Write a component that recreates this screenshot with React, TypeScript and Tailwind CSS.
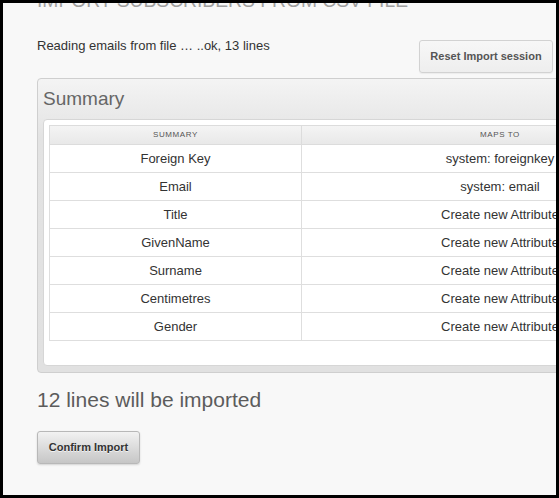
const rows: [string, string][] = [
  ["Foreign Key", "system: foreignkey"],
  ["Email", "system: email"],
  ["Title", "Create new Attribute"],
  ["GivenName", "Create new Attribute"],
  ["Surname", "Create new Attribute"],
  ["Centimetres", "Create new Attribute"],
  ["Gender", "Create new Attribute"],
];

const font = "font-['Liberation_Sans',Arial,sans-serif]";

export default function App() {
  return (
    <div className={"w-[559px] h-[498px] bg-black p-[3px] " + font}>
      <div className="h-full bg-[#f8f8f8] overflow-hidden pl-[34px]">
        {/* Page title, scrolled mostly out of view */}
        <h1 className="mt-[-12px] text-[19.3px] leading-[19px] uppercase text-[#a0a0a0] whitespace-nowrap">
          Import subscribers from CSV file
        </h1>

        <div className="mt-[28px] w-[516px] flex items-start justify-between">
          <p className="text-[13px] leading-[16px] text-[#333]">
            Reading emails from file … ..ok, 13 lines
          </p>
          <button className="mt-[2px] h-[33px] w-[134px] rounded-[3px] border border-[#d2d2d2] bg-gradient-to-b from-[#f7f7f7] to-[#eeeeee] text-[11px] font-bold text-[#555] shadow-[0_1px_1px_rgba(0,0,0,0.05)]">
            Reset Import session
          </button>
        </div>

        {/* Summary panel */}
        <div className="mt-[5px] w-[674px] rounded-[4px] border border-[#cfcfcf] bg-gradient-to-b from-[#f4f4f4] via-[#e3e3e3] via-[20%] to-[#e1e1e1] px-[5px] pb-[6px]">
          <h2 className="pt-[8px] mb-[8px] text-[19px] leading-[24px] text-[#666]">Summary</h2>
          <div className="rounded-[4px] border border-[#d6d6d6] bg-white pt-[5px] px-[5px] pb-[24px]">
            <table className="w-[650px] border-collapse text-[13px] text-[#333]">
              <thead>
                <tr className="h-[19px] bg-gradient-to-b from-[#f4f4f4] to-[#e8e8e8]">
                  <th className="w-[252px] border border-[#dcdcdc] text-[8px] font-normal tracking-[0.6px] text-[#555] uppercase">
                    Summary
                  </th>
                  <th className="border border-[#dcdcdc] text-[8px] font-normal tracking-[0.6px] text-[#555] uppercase">
                    Maps to
                  </th>
                </tr>
              </thead>
              <tbody>
                {rows.map(([k, v]) => (
                  <tr key={k} className="h-[28px]">
                    <td className="border border-[#dedede] text-center">{k}</td>
                    <td className="border border-[#dedede] text-center">{v}</td>
                  </tr>
                ))}
              </tbody>
            </table>
          </div>
        </div>

        <p className="mt-[15px] text-[21px] leading-[24px] text-[#5c5c5c]">12 lines will be imported</p>

        <button className="mt-[19px] h-[33px] w-[103px] rounded-[3px] border border-[#b8b8b8] bg-gradient-to-b from-[#f2f2f2] to-[#c6c6c6] text-[11px] font-bold text-[#333] [text-shadow:0_1px_0_rgba(255,255,255,0.7)] shadow-[0_1px_2px_rgba(0,0,0,0.15)]">
          Confirm Import
        </button>
      </div>
    </div>
  );
}
